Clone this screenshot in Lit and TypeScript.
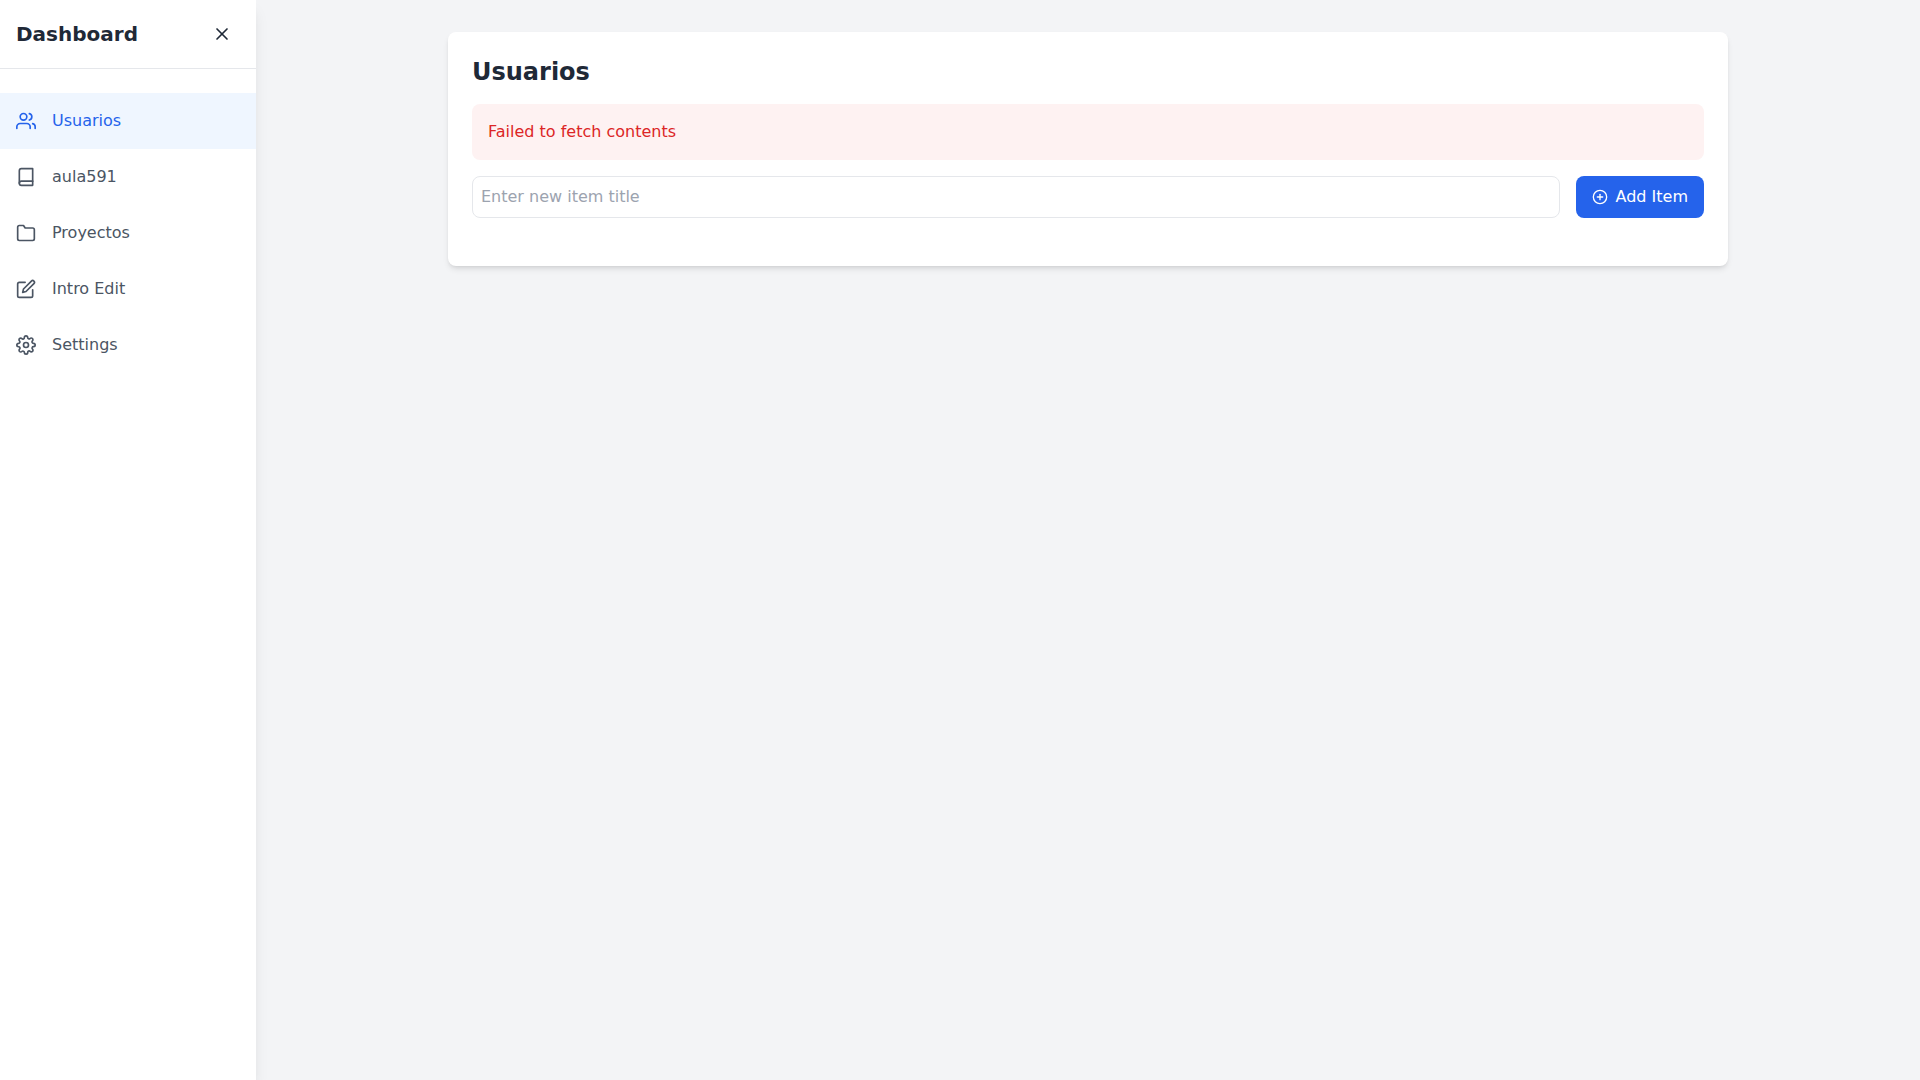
import { LitElement, css, html, svg, type SVGTemplateResult } from "lit";
import { customElement, state } from "lit/decorators.js";

type IconName = "users" | "book" | "folder" | "edit" | "settings" | "close" | "plus";

const shapes: Record<IconName, SVGTemplateResult> = {
  users: svg`
    <path d="M17 21v-2a4 4 0 0 0-4-4H5a4 4 0 0 0-4 4v2"></path>
    <circle cx="9" cy="7" r="4"></circle>
    <path d="M23 21v-2a4 4 0 0 0-3-3.87"></path>
    <path d="M16 3.13a4 4 0 0 1 0 7.75"></path>`,
  book: svg`
    <path d="M4 19.5A2.5 2.5 0 0 1 6.5 17H20"></path>
    <path d="M6.5 2H20v20H6.5A2.5 2.5 0 0 1 4 19.5v-15A2.5 2.5 0 0 1 6.5 2z"></path>`,
  folder: svg`
    <path d="M22 19a2 2 0 0 1-2 2H4a2 2 0 0 1-2-2V5a2 2 0 0 1 2-2h5l2 3h9a2 2 0 0 1 2 2z"></path>`,
  edit: svg`
    <path d="M11 4H4a2 2 0 0 0-2 2v14a2 2 0 0 0 2 2h14a2 2 0 0 0 2-2v-7"></path>
    <path d="M18.5 2.5a2.121 2.121 0 0 1 3 3L12 15l-4 1 1-4 9.5-9.5z"></path>`,
  settings: svg`
    <circle cx="12" cy="12" r="3"></circle>
    <path d="M19.4 15a1.65 1.65 0 0 0 .33 1.82l.06.06a2 2 0 0 1 0 2.83 2 2 0 0 1-2.83 0l-.06-.06a1.65 1.65 0 0 0-1.82-.33 1.65 1.65 0 0 0-1 1.51V21a2 2 0 0 1-2 2 2 2 0 0 1-2-2v-.09A1.65 1.65 0 0 0 9 19.4a1.65 1.65 0 0 0-1.82.33l-.06.06a2 2 0 0 1-2.83 0 2 2 0 0 1 0-2.83l.06-.06a1.65 1.65 0 0 0 .33-1.82 1.65 1.65 0 0 0-1.51-1H3a2 2 0 0 1-2-2 2 2 0 0 1 2-2h.09A1.65 1.65 0 0 0 4.6 9a1.65 1.65 0 0 0-.33-1.82l-.06-.06a2 2 0 0 1 0-2.83 2 2 0 0 1 2.83 0l.06.06a1.65 1.65 0 0 0 1.82.33H9a1.65 1.65 0 0 0 1-1.51V3a2 2 0 0 1 2-2 2 2 0 0 1 2 2v.09a1.65 1.65 0 0 0 1 1.51 1.65 1.65 0 0 0 1.82-.33l.06-.06a2 2 0 0 1 2.83 0 2 2 0 0 1 0 2.83l-.06.06a1.65 1.65 0 0 0-.33 1.82V9a1.65 1.65 0 0 0 1.51 1H21a2 2 0 0 1 2 2 2 2 0 0 1-2 2h-.09a1.65 1.65 0 0 0-1.51 1z"></path>`,
  close: svg`
    <line x1="18" y1="6" x2="6" y2="18"></line>
    <line x1="6" y1="6" x2="18" y2="18"></line>`,
  plus: svg`
    <circle cx="12" cy="12" r="10"></circle>
    <line x1="12" y1="8" x2="12" y2="16"></line>
    <line x1="8" y1="12" x2="16" y2="12"></line>`,
};

const icon = (name: IconName, size = 20) => html`
  <svg
    class="icon"
    width=${size}
    height=${size}
    viewBox="0 0 24 24"
    fill="none"
    stroke="currentColor"
    stroke-width="2"
    stroke-linecap="round"
    stroke-linejoin="round"
    aria-hidden="true"
  >
    ${shapes[name]}
  </svg>
`;

interface Section {
  id: string;
  label: string;
  icon: IconName;
}

const sections: Section[] = [
  { id: "usuarios", label: "Usuarios", icon: "users" },
  { id: "aula591", label: "aula591", icon: "book" },
  { id: "proyectos", label: "Proyectos", icon: "folder" },
  { id: "intro", label: "Intro Edit", icon: "edit" },
  { id: "settings", label: "Settings", icon: "settings" },
];

@customElement("app-root")
export class AppRoot extends LitElement {
  @state() private active = "usuarios";
  @state() private newTitle = "";

  static styles = css`
    :host {
      display: flex;
      min-height: 100vh;
      background: #f3f4f6;
      color: #1f2937;
      font: 16px/24px "DejaVu Sans", sans-serif;
    }

    *,
    *::before,
    *::after {
      box-sizing: border-box;
    }

    button,
    input {
      margin: 0;
      font: inherit;
    }

    .icon {
      display: block;
      flex: none;
    }

    .sidebar {
      flex: none;
      width: 256px;
      background: #ffffff;
      box-shadow:
        0 10px 15px -3px rgb(0 0 0 / 0.1),
        0 4px 6px -4px rgb(0 0 0 / 0.1);
    }

    .sidebar-header {
      display: flex;
      align-items: center;
      justify-content: space-between;
      padding: 16px;
      border-bottom: 1px solid #e5e7eb;
    }

    .brand {
      margin: 0;
      font-size: 20px;
      line-height: 28px;
      font-weight: 700;
    }

    .close {
      padding: 8px;
      border: 0;
      border-radius: 8px;
      background: transparent;
      color: inherit;
      cursor: pointer;
    }

    .close:hover {
      background: #f3f4f6;
    }

    .nav {
      display: flex;
      flex-direction: column;
      margin-top: 24px;
    }

    .nav-link {
      display: flex;
      align-items: center;
      gap: 16px;
      padding: 16px;
      color: #4b5563;
      text-decoration: none;
    }

    .nav-link:hover,
    .nav-link.active {
      background: #eff6ff;
      color: #2563eb;
    }

    .main {
      flex: 1;
      min-width: 0;
      padding: 32px;
    }

    .card {
      max-width: 1280px;
      margin: 0 auto;
      padding: 24px;
      border-radius: 8px;
      background: #ffffff;
      box-shadow:
        0 4px 6px -1px rgb(0 0 0 / 0.1),
        0 2px 4px -2px rgb(0 0 0 / 0.1);
    }

    .title {
      margin: 0 0 16px;
      font-size: 24px;
      line-height: 32px;
      font-weight: 700;
    }

    .error {
      margin: 0 0 16px;
      padding: 16px;
      border-radius: 8px;
      background: #fef2f2;
      color: #dc2626;
    }

    .add-form {
      display: flex;
      gap: 16px;
      margin-bottom: 24px;
    }

    .title-input {
      flex: 1;
      min-width: 0;
      padding: 8px;
      border: 1px solid #e5e7eb;
      border-radius: 8px;
      background: #ffffff;
      color: inherit;
    }

    .title-input::placeholder {
      color: #9ca3af;
      opacity: 1;
    }

    .add-button {
      display: flex;
      align-items: center;
      gap: 8px;
      padding: 8px 16px;
      border: 0;
      border-radius: 8px;
      background: #2563eb;
      color: #ffffff;
      cursor: pointer;
    }

    .add-button:hover {
      background: #1d4ed8;
    }
  `;

  private select(event: Event, id: string) {
    event.preventDefault();
    this.active = id;
  }

  private onInput(event: Event) {
    this.newTitle = (event.target as HTMLInputElement).value;
  }

  private onSubmit(event: Event) {
    event.preventDefault();
    this.newTitle = "";
  }

  render() {
    const current = sections.find((section) => section.id === this.active)!;
    return html`
      <aside class="sidebar">
        <div class="sidebar-header">
          <h1 class="brand">Dashboard</h1>
          <button class="close" type="button" aria-label="Close sidebar">${icon("close")}</button>
        </div>
        <nav class="nav">
          ${sections.map(
            (section) => html`
              <a
                class="nav-link ${section.id === this.active ? "active" : ""}"
                href="#${section.id}"
                @click=${(event: Event) => this.select(event, section.id)}
              >
                ${icon(section.icon)}
                <span>${section.label}</span>
              </a>
            `,
          )}
        </nav>
      </aside>
      <main class="main">
        <section class="card">
          <h2 class="title">${current.label}</h2>
          <p class="error" role="alert">Failed to fetch contents</p>
          <form class="add-form" @submit=${this.onSubmit}>
            <input
              class="title-input"
              type="text"
              aria-label="New item title"
              placeholder="Enter new item title"
              .value=${this.newTitle}
              @input=${this.onInput}
            />
            <button class="add-button" type="submit">${icon("plus", 16)}<span>Add Item</span></button>
          </form>
        </section>
      </main>
    `;
  }
}
